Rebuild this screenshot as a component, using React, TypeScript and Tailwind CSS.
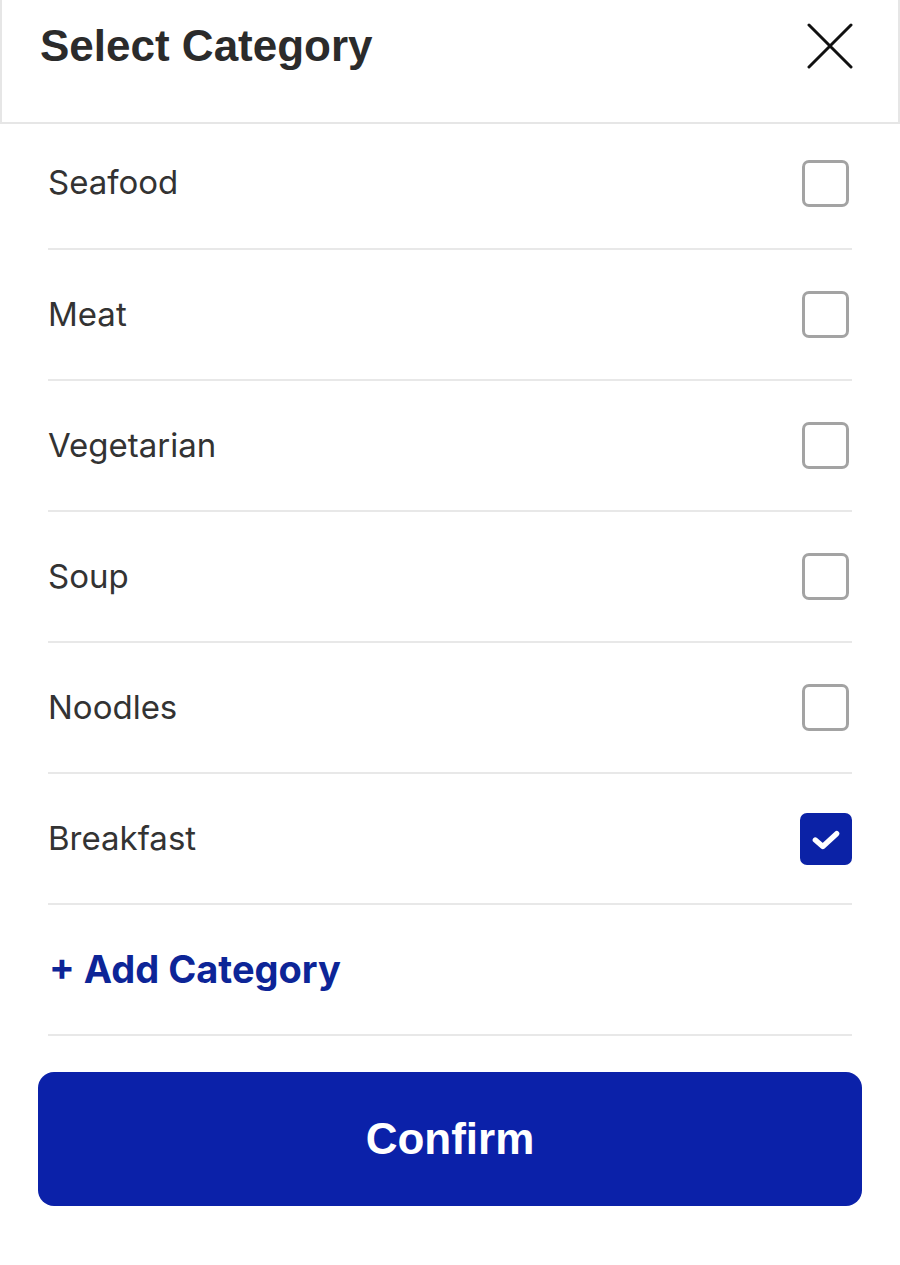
import React, { useState } from 'react';

const categories = ['Seafood', 'Meat', 'Vegetarian', 'Soup', 'Noodles', 'Breakfast'];

const CloseIcon = () => (
  <svg width="46" height="46" viewBox="0 0 46 46" fill="none" stroke="#111" strokeWidth="3" strokeLinecap="round">
    <path d="M2 2 L44 44 M44 2 L2 44" />
  </svg>
);

const Checkbox: React.FC<{ checked: boolean }> = ({ checked }) =>
  checked ? (
    <div className="w-[52px] h-[52px] rounded-[7px] bg-[#0b22a6] flex items-center justify-center">
      <svg width="32" height="32" viewBox="0 0 30 30" fill="none" stroke="white" strokeWidth="5" strokeLinecap="round" strokeLinejoin="round">
        <path d="M5 16 L12 22 L25 10" />
      </svg>
    </div>
  ) : (
    <div className="w-[47px] h-[47px] mr-[3px] rounded-[7px] border-[3px] border-[#a3a3a3] bg-white" />
  );

export default function App() {
  const [selected, setSelected] = useState<string[]>(['Breakfast']);

  const toggle = (c: string) =>
    setSelected(prev => (prev.includes(c) ? prev.filter(x => x !== c) : [...prev, c]));

  return (
    <div className="w-[900px] h-[1265px] bg-white">
      <div className="h-[124px] border-x-2 border-b-2 border-[#e6e6e6] flex items-center justify-between pl-[38px] pr-[45px] pb-[34px] pt-[4px]">
        <h1 className="text-[44px] font-bold text-[#2b2b2b]" style={{ fontFamily: '"Liberation Sans", Arial, sans-serif' }}>
          Select Category
        </h1>
        <CloseIcon />
      </div>

      <div className="px-[48px]" style={{ fontFamily: 'Inter, "Noto Sans", sans-serif' }}>
        {categories.map((c, i) => (
          <button
            key={c}
            type="button"
            onClick={() => toggle(c)}
            className={`w-full flex items-center justify-between border-b-2 border-[#e8e8e8] ${i === 0 ? 'h-[126px] pb-[6px]' : 'h-[131px]'}`}
          >
            <span className="text-[33px] text-[#333333]">{c}</span>
            <Checkbox checked={selected.includes(c)} />
          </button>
        ))}
        <div className="h-[131px] flex items-center border-b-2 border-[#e8e8e8]">
          <span className="text-[38px] font-bold text-[#0d2597] pl-[1px]">+ Add Category</span>
        </div>
      </div>

      <div className="px-[38px] pt-[36px]">
        <button
          type="button"
          className="w-full h-[134px] rounded-[16px] bg-[#0b21a9] text-white text-[44px] font-bold"
          style={{ fontFamily: '"Liberation Sans", Arial, sans-serif' }}
        >
          Confirm
        </button>
      </div>
    </div>
  );
}
